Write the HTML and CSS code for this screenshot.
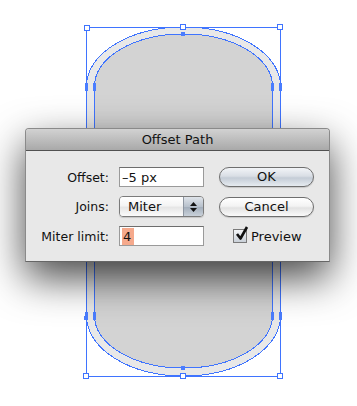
FILE: index.html
```html
<!DOCTYPE html>
<html>
  <head>
    <meta charset="utf-8" />
    <title>Offset Path</title>
    <link rel="stylesheet" href="styles.css">
  </head>
  <body>
    <div id="stage">
      <svg class="artboard" width="357" height="406" viewBox="0 0 357 406">
        <!-- original shape -->
        <path class="outer" d="M86.5,86 A97,59 0 0 1 280.5,86 V316 A97,60 0 0 1 86.5,316 Z" />
        <!-- offset preview -->
        <path class="inner" d="M94.5,86 A89,52 0 0 1 272.5,86 V316 A89,52 0 0 1 94.5,316 Z" />
        <rect class="bbox" x="86.5" y="27.5" width="194" height="349" />
        <g class="anchor">
          <rect x="85" y="83" width="3" height="8" />
          <rect x="93" y="83" width="3" height="8" />
          <rect x="271" y="83" width="3" height="8" />
          <rect x="279" y="83" width="3" height="8" />
          <rect x="85" y="312" width="3" height="8" />
          <rect x="93" y="312" width="3" height="8" />
          <rect x="271" y="312" width="3" height="8" />
          <rect x="279" y="312" width="3" height="8" />
          <rect x="181" y="32" width="4" height="4" />
          <rect x="181" y="366" width="4" height="4" />
          <rect x="84" y="316" width="3" height="4" />
        </g>
        <g class="handle">
          <rect x="84.5" y="25.5" width="5" height="5" />
          <rect x="180.5" y="24.5" width="5" height="5" />
          <rect x="277.5" y="24.5" width="5" height="5" />
          <rect x="83.5" y="373.5" width="5" height="5" />
          <rect x="180.5" y="373.5" width="5" height="5" />
          <rect x="277.5" y="373.5" width="5" height="5" />
        </g>
      </svg>

      <div class="dialog">
        <div class="titlebar">Offset Path</div>
        <div class="fields">
          <label>Offset:</label>
          <div class="textbox">–5 px</div>
          <div class="button default">OK</div>

          <label>Joins:</label>
          <div class="popup">
            <span class="popup-value">Miter</span>
            <span class="popup-arrows">
              <svg width="9" height="12" viewBox="0 0 9 12">
                <path d="M4.5,1 L8,5 H1 Z M4.5,11 L8,7 H1 Z" fill="#111" />
              </svg>
            </span>
          </div>
          <div class="button">Cancel</div>

          <label>Miter limit:</label>
          <div class="textbox"><span class="selected">4</span></div>
          <div class="check">
            <span class="box">
              <svg width="16" height="16" viewBox="0 0 16 16">
                <path d="M3,8 L6.5,12.5 L13,1" fill="none" stroke="#111" stroke-width="2.6" stroke-linejoin="round" />
              </svg>
            </span>
            <span>Preview</span>
          </div>
        </div>
      </div>
    </div>
  </body>
</html>
```

FILE: styles.css
```css
* {
  box-sizing: border-box;
}
body {
  margin: 0;
  background-color: #fff;
  font-family: "DejaVu Sans", "Noto Sans", sans-serif;
  font-size: 12.5px;
  color: #111;
}
#stage {
  position: relative;
  width: 357px;
  height: 406px;
  overflow: hidden;
}
.artboard {
  position: absolute;
  left: 0;
  top: 0;
}
.outer,
.inner,
.bbox {
  stroke: #3f74ff;
  stroke-width: 1;
  shape-rendering: crispEdges;
}
.outer {
  fill: #e8e8e8;
}
.inner {
  fill: #d3d3d3;
}
.bbox {
  fill: none;
}
.anchor rect {
  fill: #4a7dff;
}
.handle rect {
  fill: #fff;
  stroke: #3f74ff;
  stroke-width: 1;
}

/* dialog */
.dialog {
  position: absolute;
  left: 25px;
  top: 128px;
  width: 305px;
  height: 134px;
  background-color: #e8e8e8;
  border: 1px solid #8a8a8a;
  border-bottom-color: #666;
  border-radius: 4px 4px 0 0;
  box-shadow: 0 16px 40px rgba(0, 0, 0, 0.72);
}
.titlebar {
  height: 22px;
  line-height: 21px;
  text-align: center;
  font-size: 13px;
  background: linear-gradient(#d2d2d2, #a9a9a9);
  border-bottom: 1px solid #515151;
  border-radius: 3px 3px 0 0;
}
.fields {
  display: grid;
  grid-template-columns: 83px 85px 100px;
  grid-template-rows: 20px 21px 20px;
  column-gap: 10px;
  row-gap: 9px;
  align-items: center;
  padding-top: 16px;
}
label {
  text-align: right;
}
.textbox {
  height: 20px;
  background-color: #fff;
  border: 1px solid #9a9a9a;
  border-top-color: #6d6d6d;
  padding: 1px 0 0 2px;
  font-size: 13px;
  line-height: 17px;
}
.selected {
  display: inline-block;
  background-color: #f5a98c;
  padding: 0 3px 0 1px;
}
.button {
  height: 20px;
  margin-left: 5px;
  border: 1px solid #6e6e6e;
  border-radius: 10px;
  text-align: center;
  font-size: 13px;
  line-height: 18px;
  background: linear-gradient(#ffffff, #f3f3f3 45%, #e2e2e2 55%, #fafafa);
  box-shadow: 0 1px 1px rgba(0, 0, 0, 0.15);
}
.button.default {
  background: linear-gradient(#f2f4f7, #d9dee5 45%, #c4ccd6 55%, #e6ebf0);
}
.popup {
  display: flex;
  height: 21px;
  border: 1px solid #7b7b7b;
  border-radius: 4px;
  overflow: hidden;
  box-shadow: 0 1px 1px rgba(0, 0, 0, 0.15);
}
.popup-value {
  flex: 1;
  padding-left: 8px;
  font-size: 13px;
  line-height: 19px;
  background: linear-gradient(#ffffff, #f4f4f4 45%, #e6e6e6 55%, #fbfbfb);
}
.popup-arrows {
  width: 20px;
  display: flex;
  align-items: center;
  justify-content: center;
  border-left: 1px solid #8e96a1;
  background: linear-gradient(#dfe4ea, #b8c1cc 50%, #a4afbc 55%, #c9d1da);
}
.check {
  display: flex;
  align-items: center;
  gap: 4px;
  margin-left: 19px;
  font-size: 13px;
}
.box {
  position: relative;
  width: 14px;
  height: 14px;
  border: 1px solid #7a7a7a;
  background: linear-gradient(#f4f6f8, #c9d0d8);
}
.box svg {
  position: absolute;
  left: 0;
  top: -4px;
}
```
